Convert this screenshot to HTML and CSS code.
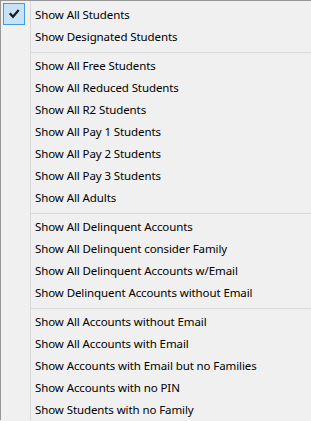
FILE: index.html
```html
<!DOCTYPE html>
<html>
<head>
<meta charset="utf-8">
<link rel="stylesheet" href="styles.css">
</head>
<body>
<div class="menu">
  <div class="item">
    <span class="check checked"><svg width="20" height="20" viewBox="0 0 20 20"><path d="M6.5 10 L9 12.8 L14 6.8" fill="none" stroke="#1a1a1a" stroke-width="2.2" stroke-linecap="square"/></svg></span>
    <span class="label">Show All Students</span>
  </div>
  <div class="item"><span class="check"></span><span class="label">Show Designated Students</span></div>
  <div class="sep"></div>
  <div class="item"><span class="check"></span><span class="label">Show All Free Students</span></div>
  <div class="item"><span class="check"></span><span class="label">Show All Reduced Students</span></div>
  <div class="item"><span class="check"></span><span class="label">Show All R2 Students</span></div>
  <div class="item"><span class="check"></span><span class="label">Show All Pay 1 Students</span></div>
  <div class="item"><span class="check"></span><span class="label">Show All Pay 2 Students</span></div>
  <div class="item"><span class="check"></span><span class="label">Show All Pay 3 Students</span></div>
  <div class="item"><span class="check"></span><span class="label">Show All Adults</span></div>
  <div class="sep"></div>
  <div class="item"><span class="check"></span><span class="label">Show All Delinquent Accounts</span></div>
  <div class="item"><span class="check"></span><span class="label">Show All Delinquent consider Family</span></div>
  <div class="item"><span class="check"></span><span class="label">Show All Delinquent Accounts w/Email</span></div>
  <div class="item"><span class="check"></span><span class="label">Show Delinquent Accounts without Email</span></div>
  <div class="sep"></div>
  <div class="item"><span class="check"></span><span class="label">Show All Accounts without Email</span></div>
  <div class="item"><span class="check"></span><span class="label">Show All Accounts with Email</span></div>
  <div class="item"><span class="check"></span><span class="label">Show Accounts with Email but no Families</span></div>
  <div class="item"><span class="check"></span><span class="label">Show Accounts with no PIN</span></div>
  <div class="item"><span class="check"></span><span class="label">Show Students with no Family</span></div>
</div>
</body>
</html>
```
FILE: styles.css
```css
html, body {
  margin: 0;
  padding: 0;
  background: #f0f0f0;
  overflow: hidden;
}
.menu {
  border-top: 1px solid #979797;
  border-left: 1px solid #979797;
  padding: 2px 0 0 2px;
  background: linear-gradient(#d8d8d8, #d8d8d8) 29px 0 / 1px 100% no-repeat, #f0f0f0;
  font-family: "Noto Sans", "Open Sans", sans-serif;
  font-size: 11.5px;
  letter-spacing: -0.1px;
  color: #000;
  display: flex;
  flex-direction: column;
}
.item {
  display: flex;
  align-items: flex-start;
  height: 22px;
  white-space: nowrap;
}
.check {
  width: 22px;
  height: 22px;
  flex: none;
  box-sizing: border-box;
}
.check.checked {
  border: 1px solid #3c9ee0;
  background: #c7e2f6;
}
.check svg {
  display: block;
}
.label {
  padding-left: 10px;
  padding-top: 1px;
  line-height: 22px;
}
.sep {
  height: 1px;
  margin: 5px 0 1px 28px;
  background: #d8d8d8;
}
```
